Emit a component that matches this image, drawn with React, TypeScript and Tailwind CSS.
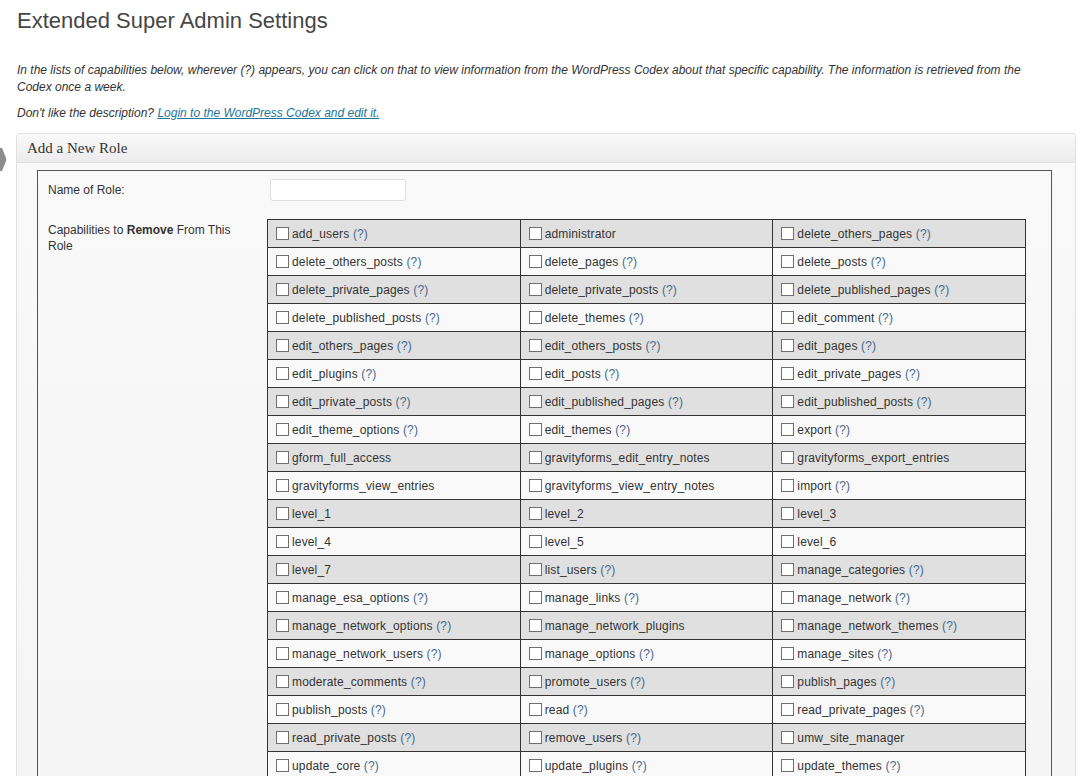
const rows: string[][] = [
  ["add_users (?)", "administrator", "delete_others_pages (?)"],
  ["delete_others_posts (?)", "delete_pages (?)", "delete_posts (?)"],
  ["delete_private_pages (?)", "delete_private_posts (?)", "delete_published_pages (?)"],
  ["delete_published_posts (?)", "delete_themes (?)", "edit_comment (?)"],
  ["edit_others_pages (?)", "edit_others_posts (?)", "edit_pages (?)"],
  ["edit_plugins (?)", "edit_posts (?)", "edit_private_pages (?)"],
  ["edit_private_posts (?)", "edit_published_pages (?)", "edit_published_posts (?)"],
  ["edit_theme_options (?)", "edit_themes (?)", "export (?)"],
  ["gform_full_access", "gravityforms_edit_entry_notes", "gravityforms_export_entries"],
  ["gravityforms_view_entries", "gravityforms_view_entry_notes", "import (?)"],
  ["level_1", "level_2", "level_3"],
  ["level_4", "level_5", "level_6"],
  ["level_7", "list_users (?)", "manage_categories (?)"],
  ["manage_esa_options (?)", "manage_links (?)", "manage_network (?)"],
  ["manage_network_options (?)", "manage_network_plugins", "manage_network_themes (?)"],
  ["manage_network_users (?)", "manage_options (?)", "manage_sites (?)"],
  ["moderate_comments (?)", "promote_users (?)", "publish_pages (?)"],
  ["publish_posts (?)", "read (?)", "read_private_pages (?)"],
  ["read_private_posts (?)", "remove_users (?)", "umw_site_manager"],
  ["update_core (?)", "update_plugins (?)", "update_themes (?)"],
];

function Capability({ label }: { label: string }) {
  const hasHelp = label.endsWith(" (?)");
  const name = hasHelp ? label.slice(0, -4) : label;
  return (
    <label className="flex items-center">
      <span className="inline-block w-[13px] h-[13px] mr-[3px] bg-white border border-[#6f6f6f] shrink-0" />
      <span className="whitespace-pre tracking-[0.15px]">
        {name}
        {hasHelp && (
          <>
            {" "}
            <a className="text-[#47698c]">(?)</a>
          </>
        )}
      </span>
    </label>
  );
}

export default function App() {
  return (
    <div className="relative h-[776px] overflow-hidden bg-white text-[#333] font-['Liberation_Sans',Arial,sans-serif] pl-[16px] pr-[13px]">
      {/* collapsed admin menu pointer peeking in at the edge */}
      <svg className="absolute left-0 top-[148px]" width="7" height="23" viewBox="0 0 7 23">
        <path d="M0 0 H2 L6 10 Q6.6 11.5 6 13 L2 23 H0 Z" fill="#8c8c8c" />
      </svg>

      <h2 className="pl-[1px] pt-[6px] text-[22px] leading-[29px] text-[#464646]">Extended Super Admin Settings</h2>

      <p className="mt-[27px] pl-[1px] pr-[30px] text-[12px] leading-[17px] italic">
        In the lists of capabilities below, wherever (?) appears, you can click on that to view information from the WordPress Codex about that specific capability. The information is retrieved from the Codex once a week.
      </p>
      <p className="mt-[9px] pl-[1px] text-[12px] leading-[17px] italic">
        Don't like the description?{" "}
        <a className="text-[#21759b] underline">Login to the WordPress Codex and edit it.</a>
      </p>

      <div className="mt-[11px] border border-[#dfdfdf] rounded-t-[3px] bg-gradient-to-b from-[#f9f9f9] to-[#f5f5f5]">
        <div className="h-[29px] pl-[10px] flex items-center border-b border-[#dfdfdf] bg-gradient-to-b from-[#f9f9f9] to-[#ececec] font-['Liberation_Serif',Georgia,serif] text-[15px] text-[#333]">
          Add a New Role
        </div>
        <div className="pt-[7px] pl-[20px] pr-[23px]">
          <div className="border border-[#555] pt-[8px] pl-[10px] pb-[20px]">
            <div className="flex items-center">
              <div className="w-[221px] text-[12px]">Name of Role:</div>
              <input className="ml-[1px] w-[136px] h-[22px] bg-white border border-[#dfdfdf] rounded-[3px]" />
            </div>
            <div className="flex mt-[18px]">
              <div className="w-[219px] pr-[10px] pt-[3px] text-[12px] leading-[16px]">
                Capabilities to <b>Remove</b> From This Role
              </div>
              <table className="border-collapse text-[12px] w-[759px] table-fixed">
                <tbody>
                  {rows.map((row, i) => (
                    <tr key={i} className={i % 2 === 0 ? "bg-[#e0e0e0]" : "bg-[#f9f9f9]"}>
                      {row.map((cap) => (
                        <td key={cap} className="h-[28px] border border-[#333] pl-[8px] py-0 align-middle">
                          <Capability label={cap} />
                        </td>
                      ))}
                    </tr>
                  ))}
                </tbody>
              </table>
            </div>
          </div>
        </div>
      </div>
    </div>
  );
}
